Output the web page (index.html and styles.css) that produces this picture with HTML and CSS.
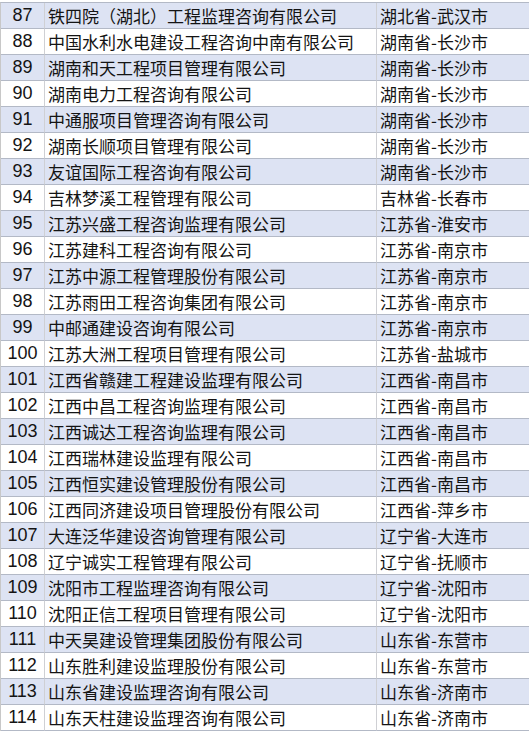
FILE: index.html
```html
<!DOCTYPE html>
<html lang="zh-CN">
<head>
<meta charset="utf-8">
<link rel="stylesheet" href="styles.css">
</head>
<body>
<table class="list">
<colgroup><col class="c-num"><col class="c-name"><col class="c-loc"></colgroup>
<tbody>
<tr><td class="num">87</td><td class="name">铁四院（湖北）工程监理咨询有限公司</td><td class="loc">湖北省-武汉市</td></tr>
<tr><td class="num">88</td><td class="name">中国水利水电建设工程咨询中南有限公司</td><td class="loc">湖南省-长沙市</td></tr>
<tr><td class="num">89</td><td class="name">湖南和天工程项目管理有限公司</td><td class="loc">湖南省-长沙市</td></tr>
<tr><td class="num">90</td><td class="name">湖南电力工程咨询有限公司</td><td class="loc">湖南省-长沙市</td></tr>
<tr><td class="num">91</td><td class="name">中通服项目管理咨询有限公司</td><td class="loc">湖南省-长沙市</td></tr>
<tr><td class="num">92</td><td class="name">湖南长顺项目管理有限公司</td><td class="loc">湖南省-长沙市</td></tr>
<tr><td class="num">93</td><td class="name">友谊国际工程咨询有限公司</td><td class="loc">湖南省-长沙市</td></tr>
<tr><td class="num">94</td><td class="name">吉林梦溪工程管理有限公司</td><td class="loc">吉林省-长春市</td></tr>
<tr><td class="num">95</td><td class="name">江苏兴盛工程咨询监理有限公司</td><td class="loc">江苏省-淮安市</td></tr>
<tr><td class="num">96</td><td class="name">江苏建科工程咨询有限公司</td><td class="loc">江苏省-南京市</td></tr>
<tr><td class="num">97</td><td class="name">江苏中源工程管理股份有限公司</td><td class="loc">江苏省-南京市</td></tr>
<tr><td class="num">98</td><td class="name">江苏雨田工程咨询集团有限公司</td><td class="loc">江苏省-南京市</td></tr>
<tr><td class="num">99</td><td class="name">中邮通建设咨询有限公司</td><td class="loc">江苏省-南京市</td></tr>
<tr><td class="num">100</td><td class="name">江苏大洲工程项目管理有限公司</td><td class="loc">江苏省-盐城市</td></tr>
<tr><td class="num">101</td><td class="name">江西省赣建工程建设监理有限公司</td><td class="loc">江西省-南昌市</td></tr>
<tr><td class="num">102</td><td class="name">江西中昌工程咨询监理有限公司</td><td class="loc">江西省-南昌市</td></tr>
<tr><td class="num">103</td><td class="name">江西诚达工程咨询监理有限公司</td><td class="loc">江西省-南昌市</td></tr>
<tr><td class="num">104</td><td class="name">江西瑞林建设监理有限公司</td><td class="loc">江西省-南昌市</td></tr>
<tr><td class="num">105</td><td class="name">江西恒实建设管理股份有限公司</td><td class="loc">江西省-南昌市</td></tr>
<tr><td class="num">106</td><td class="name">江西同济建设项目管理股份有限公司</td><td class="loc">江西省-萍乡市</td></tr>
<tr><td class="num">107</td><td class="name">大连泛华建设咨询管理有限公司</td><td class="loc">辽宁省-大连市</td></tr>
<tr><td class="num">108</td><td class="name">辽宁诚实工程管理有限公司</td><td class="loc">辽宁省-抚顺市</td></tr>
<tr><td class="num">109</td><td class="name">沈阳市工程监理咨询有限公司</td><td class="loc">辽宁省-沈阳市</td></tr>
<tr><td class="num">110</td><td class="name">沈阳正信工程项目管理有限公司</td><td class="loc">辽宁省-沈阳市</td></tr>
<tr><td class="num">111</td><td class="name">中天昊建设管理集团股份有限公司</td><td class="loc">山东省-东营市</td></tr>
<tr><td class="num">112</td><td class="name">山东胜利建设监理股份有限公司</td><td class="loc">山东省-东营市</td></tr>
<tr><td class="num">113</td><td class="name">山东省建设监理咨询有限公司</td><td class="loc">山东省-济南市</td></tr>
<tr><td class="num">114</td><td class="name">山东天柱建设监理咨询有限公司</td><td class="loc">山东省-济南市</td></tr>
</tbody>
</table>
</body>
</html>
```
FILE: styles.css
```css
html, body {
  margin: 0;
  padding: 0;
  background: #ffffff;
}
body {
  padding-top: 2px;
}
.list {
  width: 529px;
  table-layout: fixed;
  border-collapse: separate;
  border-spacing: 0;
  border-top: 1px solid #b3b9c6;
  border-left: 1px solid #c8c8c8;
  color: #141414;
}
.c-num { width: 44px; }
.c-name { width: 332px; }
.c-loc { width: 153px; }
.list td {
  height: 25px;
  padding: 0;
  line-height: 25px;
  border-bottom: 1px solid #b3b9c6;
  border-right: 1px solid #cfd0d4;
  white-space: nowrap;
  overflow: hidden;
  vertical-align: middle;
}
.list tr:nth-child(odd) td {
  background: #dde3f3;
}
.num {
  text-align: center;
  font-family: "Liberation Sans", Arial, sans-serif;
  font-size: 18px;
}
.name, .loc {
  font-family: "Noto Sans CJK SC", "Noto Sans", sans-serif;
  font-size: 17px;
}
.name {
  padding-left: 3px !important;
}
.loc {
  padding-left: 3px !important;
}
```
